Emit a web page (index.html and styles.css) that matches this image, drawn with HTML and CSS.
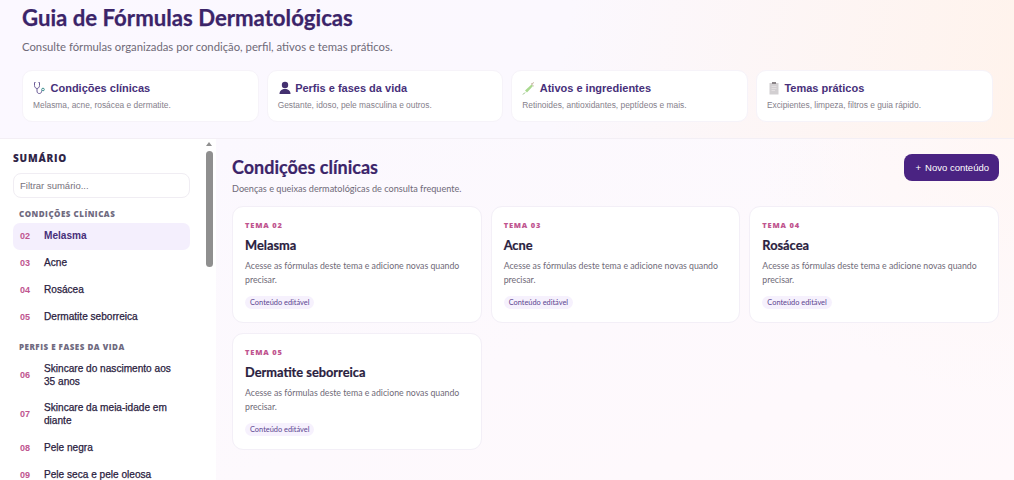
FILE: index.html
```html
<!DOCTYPE html>
<html lang="pt-BR">
<head>
<meta charset="utf-8">
<title>Guia de Fórmulas Dermatológicas</title>
<link rel="stylesheet" href="styles.css">
</head>
<body>
<div class="app">
  <header class="top">
    <h1>Guia de Fórmulas Dermatológicas</h1>
    <p class="lead">Consulte fórmulas organizadas por condição, perfil, ativos e temas práticos.</p>
    <nav class="cats">
      <a class="cat">
        <strong><svg class="ico" viewBox="0 0 14 14" fill="none" stroke="#6a5a96" stroke-width="1"><path d="M2.500 1.500H1.500V4.500C1.500 6.500 3 7.500 4 7.500S6.500 6.500 6.500 4.500V1.500H5.500M4 7.500V10C4 11.800 5 12.500 6.300 12.500S8.500 11.800 8.500 10.500V9.500"/><circle cx="10" cy="8.500" r="1.300" stroke="#3f8f8f"/></svg>Condições clínicas</strong>
        <span>Melasma, acne, rosácea e dermatite.</span>
      </a>
      <a class="cat">
        <strong><svg class="ico" viewBox="0 0 14 14" fill="#43306f"><circle cx="7" cy="4" r="3.200"/><path d="M1.500 13C1.500 9.500 4 8 7 8S12.500 9.500 12.500 13Z"/></svg>Perfis e fases da vida</strong>
        <span>Gestante, idoso, pele masculina e outros.</span>
      </a>
      <a class="cat">
        <strong><svg class="ico" viewBox="0 0 14 14" fill="none"><path d="M3 9.500L9.500 3.500L11 5L5 11.500Z" fill="#a9d98f"/><path d="M3 11.500L1 13.500" stroke="#8cb878"/><path d="M9.500 3L12 1.500M9 2.500L11.800 5.200" stroke="#c9b7a6"/></svg>Ativos e ingredientes</strong>
        <span>Retinoides, antioxidantes, peptídeos e mais.</span>
      </a>
      <a class="cat">
        <strong><svg class="ico" viewBox="0 0 14 14"><rect x="2.500" y="2" width="9" height="11.500" fill="#d2cfd1"/><rect x="5" y="1" width="4" height="2" fill="#8a8487"/><path d="M4.500 5.500H9.500M4.500 7.500H9.500M4.500 9.500H8" stroke="#eeeaec" stroke-width=".6"/></svg>Temas práticos</strong>
        <span>Excipientes, limpeza, filtros e guia rápido.</span>
      </a>
    </nav>
  </header>
  <div class="body">
    <aside class="side">
      <h2>SUMÁRIO</h2>
      <input class="filter" type="text" placeholder="Filtrar sumário...">
      <h3>CONDIÇÕES CLÍNICAS</h3>
      <ul>
        <li class="on"><b>02</b><span>Melasma</span></li>
        <li><b>03</b><span>Acne</span></li>
        <li><b>04</b><span>Rosácea</span></li>
        <li><b>05</b><span>Dermatite seborreica</span></li>
      </ul>
      <h3>PERFIS E FASES DA VIDA</h3>
      <ul>
        <li><b>06</b><span>Skincare do nascimento aos 35 anos</span></li>
        <li><b>07</b><span>Skincare da meia-idade em diante</span></li>
        <li><b>08</b><span>Pele negra</span></li>
        <li><b>09</b><span>Pele seca e pele oleosa</span></li>
      </ul>
      <div class="arrow"></div>
      <div class="thumb"></div>
    </aside>
    <main class="main">
      <div class="head">
        <div>
          <h2>Condições clínicas</h2>
          <p>Doenças e queixas dermatológicas de consulta frequente.</p>
        </div>
        <button class="new" type="button"><i>+</i>Novo conteúdo</button>
      </div>
      <section class="grid">
        <article class="card">
          <small>TEMA 02</small>
          <h4>Melasma</h4>
          <p>Acesse as fórmulas deste tema e adicione novas quando precisar.</p>
          <em>Conteúdo editável</em>
        </article>
        <article class="card">
          <small>TEMA 03</small>
          <h4>Acne</h4>
          <p>Acesse as fórmulas deste tema e adicione novas quando precisar.</p>
          <em>Conteúdo editável</em>
        </article>
        <article class="card">
          <small>TEMA 04</small>
          <h4>Rosácea</h4>
          <p>Acesse as fórmulas deste tema e adicione novas quando precisar.</p>
          <em>Conteúdo editável</em>
        </article>
        <article class="card">
          <small>TEMA 05</small>
          <h4>Dermatite seborreica</h4>
          <p>Acesse as fórmulas deste tema e adicione novas quando precisar.</p>
          <em>Conteúdo editável</em>
        </article>
      </section>
    </main>
  </div>
</div>
</body>
</html>
```
FILE: styles.css
```css
* { box-sizing: border-box; }
html, body { margin: 0; height: 100%; overflow: hidden; }
body {
  font-family: Lato, "Open Sans", sans-serif;
  background: #fcf9fe;
  color: #2a2140;
}
.app { height: 100vh; display: flex; flex-direction: column; }
.top {
  height: 139px;
  flex: none;
  padding: 3px 21.500px 0 22px;
  border-bottom: 1px solid #f3eff5;
  background: linear-gradient(100deg, #fbf8ff 0%, #fbf8fe 55%, #fff3ec 100%);
}
h1 { margin: 0; font-size: 22.200px; line-height: 30px; font-weight: 700; color: #3b2469; -webkit-text-stroke: .25px #3b2469; }
.lead { margin: 6px 0 0; font-size: 11.300px; line-height: 15px; color: #6f6a78; }
.cats { display: grid; grid-template-columns: repeat(4, 1fr); gap: 8px; margin-top: 16px; }
.cat {
  height: 52px;
  padding: 10px 10px;
  background: #fff;
  border: 1px solid #f6f3f9;
  border-radius: 10px;
  font-family: "Liberation Sans", Arial, sans-serif;
}
.cat strong { display: flex; align-items: center; gap: 3.500px; font-size: 11px; line-height: 14px; color: #47307a; }
.ico { width: 14px; height: 14px; flex: none; }
.cat span { display: block; margin-top: 4px; font-size: 8.400px; line-height: 12px; color: #85808b; }
.body { flex: 1; min-height: 0; display: flex; }
.side {
  position: relative;
  width: 216px;
  flex: none;
  height: 100%;
  overflow: hidden;
  background: #fff;
  padding: 13px 14px 0 13px;
}
.arrow {
  position: absolute;
  left: 206px;
  top: 3px;
  border-left: 3.500px solid transparent;
  border-right: 3.500px solid transparent;
  border-bottom: 4.500px solid #8f8f8f;
}
.thumb {
  position: absolute;
  left: 206px;
  top: 12px;
  width: 7px;
  height: 116px;
  border-radius: 4px;
  background: #8f8f8f;
}
.side h2 { margin: 0; font-family: "Open Sans", sans-serif; font-size: 10px; line-height: 13px; font-weight: 800; letter-spacing: .8px; color: #2f2547; }
.filter {
  display: block;
  width: 177px;
  height: 25px;
  margin-top: 8px;
  padding: 0 6px;
  border: 1px solid #f0edf3;
  border-radius: 8px;
  background: #fff;
  font: 9.500px "Liberation Sans", Arial, sans-serif;
}
.filter::placeholder { color: #77727c; }
.side h3 { margin: 10px 0 4px 6px; font-family: "Open Sans", sans-serif; font-size: 8px; line-height: 11px; font-weight: 800; letter-spacing: .5px; color: #6f6a80; }
.side ul { margin: 0 0 7px; padding: 0; list-style: none; width: 177px; font-family: "Liberation Sans", Arial, sans-serif; }
.side li { display: flex; align-items: center; min-height: 27px; padding: 7px 14px 7px 7px; border-radius: 7px; font-size: 10.100px; line-height: 12.600px; color: #2a2140; -webkit-text-stroke: .25px #2a2140; }
.side li b { flex: none; width: 24px; font-size: 9px; color: #c0558f; -webkit-text-stroke: 0; }
.side li.on { background: #f4effd; color: #47307a; font-weight: 700; -webkit-text-stroke: 0; }
.main {
  flex: 1;
  min-width: 0;
  padding: 16px 15px 0 16px;
  background:
    radial-gradient(circle at 100% 0, #fff7f5 0, rgba(255, 247, 245, 0) 260px),
    linear-gradient(155deg, #fbf8fe 0%, #fdf9fd 50%, #fff9fb 100%);
}
.head { display: flex; justify-content: space-between; align-items: flex-start; }
.head h2 { margin: 0; font-size: 18px; line-height: 24px; font-weight: 700; color: #3b2469; -webkit-text-stroke: .2px #3b2469; }
.head p { margin: 2.500px 0 0; font-size: 9.150px; line-height: 13px; color: #6f6a78; }
.new {
  height: 27px;
  padding: 0 10px 0 11.500px;
  border: 0;
  border-radius: 8px;
  background: #4a2382;
  color: #fff;
  font: 9.500px "Liberation Sans", Arial, sans-serif;
  margin-top: -1px;
}
.new i { font-style: normal; margin-right: 4px; }
.grid { display: grid; grid-template-columns: repeat(3, 1fr); gap: 10px 9px; margin-top: 11.500px; }
.card {
  height: 117px;
  padding: 13px 12px;
  background: #fff;
  border: 1px solid #f3eff7;
  border-radius: 11px;
}
.card small { display: block; font-family: "Open Sans", sans-serif; font-size: 7.500px; line-height: 10px; font-weight: 800; letter-spacing: .8px; color: #c0558f; }
.card h4 { margin: 6px 0 0; font-size: 12.800px; line-height: 18px; font-weight: 700; color: #2a2140; -webkit-text-stroke: .2px #2a2140; }
.card p { margin: 5px 0 0; font-size: 8.750px; line-height: 14px; color: #6f6a78; }
.card em { display: inline-block; margin-top: 9px; padding: 1px 5px; border-radius: 8px; background: #f6f1fd; font-size: 7.400px; line-height: 11px; font-style: normal; color: #5c4590; }
```
